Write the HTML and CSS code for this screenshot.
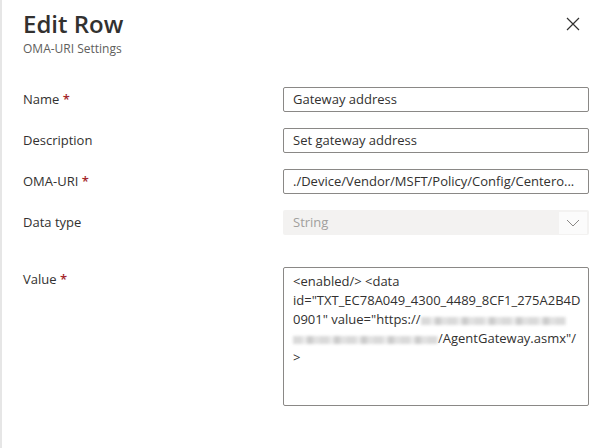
FILE: index.html
```html
<!DOCTYPE html>
<html lang="en">
<head>
    <meta charset="UTF-8">
    <meta name="viewport" content="width=device-width, initial-scale=1.0">
    <title>Edit Row</title>
    <link rel="stylesheet" href="styles.css">
</head>
<body>
    <div class="panel">
        <div class="header">
            <div>
                <h1>Edit Row</h1>
                <p class="subtitle">OMA-URI Settings</p>
            </div>
            <button class="close-btn" aria-label="Close">
                <svg width="14" height="14" viewBox="0 0 14 14">
                    <path d="M1 1 L13 13 M13 1 L1 13" stroke="#323130" stroke-width="1.2" fill="none"/>
                </svg>
            </button>
        </div>

        <div class="form">
            <label class="label">Name <span class="req">*</span></label>
            <div class="field">Gateway address</div>

            <label class="label">Description</label>
            <div class="field">Set gateway address</div>

            <label class="label">OMA-URI <span class="req">*</span></label>
            <div class="field">./Device/Vendor/MSFT/Policy/Config/Centero...</div>

            <label class="label">Data type</label>
            <div class="field dropdown">
                <span>String</span>
                <span class="chevron">
                    <svg width="14" height="8" viewBox="0 0 14 8">
                        <path d="M1 1 L7 7 L13 1" stroke="#8a8886" stroke-width="1" fill="none"/>
                    </svg>
                </span>
            </div>

            <label class="label value-label">Value <span class="req">*</span></label>
            <div class="field textarea">
                <div class="line">&lt;enabled/&gt; &lt;data</div>
                <div class="line">id="TXT_EC78A049_4300_4489_8CF1_275A2B4D</div>
                <div class="line">0901" value="https://<span class="blur" style="width: 145px"></span></div>
                <div class="line"><span class="blur" style="width: 145px"></span>/AgentGateway.asmx"/</div>
                <div class="line">&gt;</div>
            </div>
        </div>
    </div>
</body>
</html>
```

FILE: styles.css
```css
* {
    box-sizing: border-box;
    margin: 0;
    padding: 0;
}

body {
    background: #fff;
    font-family: 'Open Sans', 'Noto Sans', sans-serif;
    color: #323130;
    height: 448px;
    overflow: hidden;
    border-left: 2px solid #e6e6e6;
}

.panel {
    padding: 8px 20px 0 21px;
}

.header {
    display: flex;
    justify-content: space-between;
    align-items: flex-start;
}

h1 {
    font-size: 24px;
    font-weight: 600;
    line-height: 32px;
    color: #323130;
}

.subtitle {
    font-size: 12px;
    color: #605e5c;
    line-height: 16px;
    margin-top: 1px;
}

.close-btn {
    background: none;
    border: none;
    margin: 9px 9px 0 0;
    width: 14px;
    height: 14px;
    cursor: pointer;
}

.form {
    display: grid;
    grid-template-columns: 260px 306px;
    grid-auto-rows: 25px;
    row-gap: 16px;
    margin-top: 30px;
}

.label {
    font-size: 13px;
    line-height: 25px;
    color: #323130;
}

.req {
    color: #a4262c;
    font-weight: 600;
}

.field {
    border: 1px solid #8a8886;
    border-radius: 2px;
    font-size: 13px;
    line-height: 23px;
    padding: 0 9px;
    color: #323130;
    white-space: nowrap;
    overflow: hidden;
}

.dropdown {
    border: none;
    background: #f3f2f1;
    color: #a19f9d;
    display: flex;
    justify-content: space-between;
    align-items: center;
    padding: 0 2px 0 10px;
}

.chevron {
    width: 28px;
    height: 22px;
    background: #fbfbfb;
    display: flex;
    align-items: center;
    justify-content: center;
}

.value-label {
    margin-top: 16px;
}

.textarea {
    margin-top: 16px;
    height: 139px;
    padding: 4px 9px;
    line-height: 19px;
}

.line {
    white-space: nowrap;
}

.blur {
    display: inline-block;
    height: 8px;
    vertical-align: middle;
    background: repeating-linear-gradient(90deg, #d4d4d4 0 9px, #e6e6e6 9px 14px, #c4c4c4 14px 20px, #dcdcdc 20px 27px);
    filter: blur(1.6px);
    opacity: 0.85;
}
```
